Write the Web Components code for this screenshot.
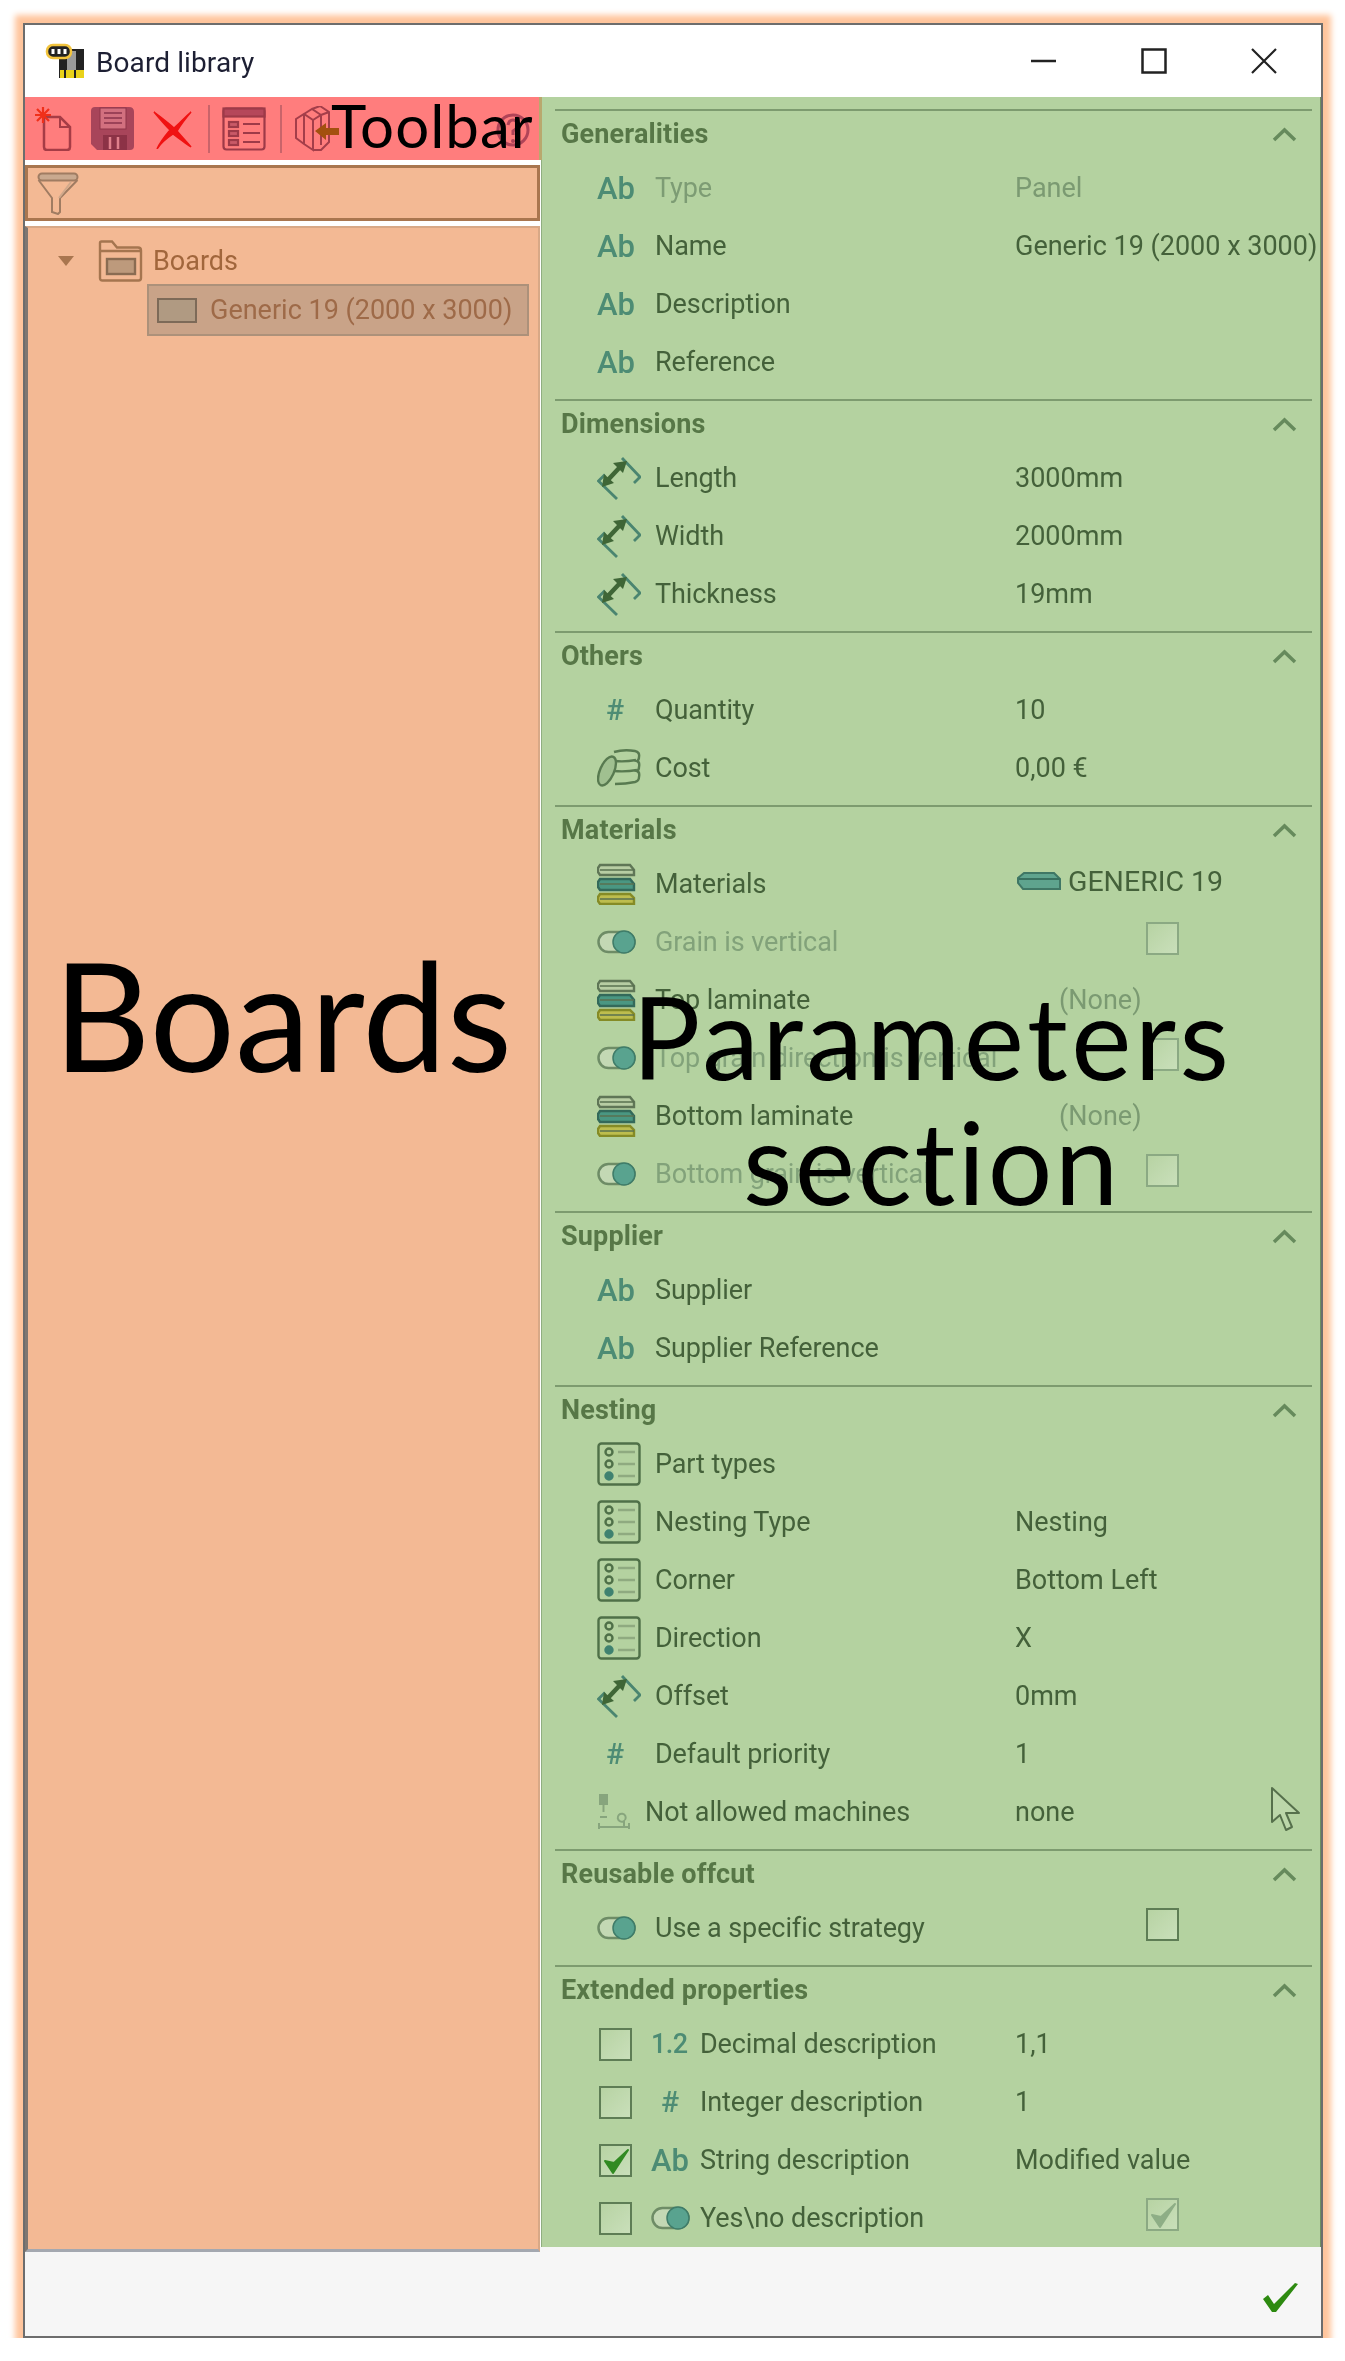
<!DOCTYPE html>
<html>
<head>
<meta charset="utf-8">
<title>Board library</title>
<style>
  html, body { margin: 0; padding: 0; background: #fff; }
  body { font-family: Roboto, "Liberation Sans", sans-serif; }
</style>
</head>
<body>
<board-window>
  <win-titlebar slot="title">Board library</win-titlebar>
  <tool-bar slot="toolbar"></tool-bar>
  <board-tree slot="left">
    <tree-node slot="nodes" icon="folder" arrow>Boards</tree-node>
    <tree-node slot="nodes" icon="board" selected>Generic 19 (2000 x 3000)</tree-node>
  </board-tree>

  <param-panel slot="right">
    <param-section heading="Generalities">
      <param-row icon="ab" value="Panel" muted-value muted-label>Type</param-row>
      <param-row icon="ab" value="Generic 19 (2000 x 3000)">Name</param-row>
      <param-row icon="ab">Description</param-row>
      <param-row icon="ab">Reference</param-row>
    </param-section>
    <param-section heading="Dimensions">
      <param-row icon="dim" value="3000mm">Length</param-row>
      <param-row icon="dim" value="2000mm">Width</param-row>
      <param-row icon="dim" value="19mm">Thickness</param-row>
    </param-section>
    <param-section heading="Others">
      <param-row icon="hash" value="10">Quantity</param-row>
      <param-row icon="coins" value="0,00 €">Cost</param-row>
    </param-section>
    <param-section heading="Materials">
      <param-row icon="layers" value="GENERIC 19" value-icon="sheet">Materials</param-row>
      <param-row icon="toggle" toggle="off" muted-label faded>Grain is vertical</param-row>
      <param-row icon="layers" value="(None)" indent muted-value>Top laminate</param-row>
      <param-row icon="toggle" toggle="off" muted-label faded>Top grain direction is vertical</param-row>
      <param-row icon="layers" value="(None)" indent muted-value>Bottom laminate</param-row>
      <param-row icon="toggle" toggle="off" muted-label faded>Bottom grain is vertical</param-row>
    </param-section>
    <param-section heading="Supplier">
      <param-row icon="ab">Supplier</param-row>
      <param-row icon="ab">Supplier Reference</param-row>
    </param-section>
    <param-section heading="Nesting">
      <param-row icon="list">Part types</param-row>
      <param-row icon="list" value="Nesting">Nesting Type</param-row>
      <param-row icon="list" value="Bottom Left">Corner</param-row>
      <param-row icon="list" value="X">Direction</param-row>
      <param-row icon="dim" value="0mm">Offset</param-row>
      <param-row icon="hash" value="1">Default priority</param-row>
      <param-row icon="machine" value="none" tight>Not allowed machines</param-row>
    </param-section>
    <param-section heading="Reusable offcut">
      <param-row icon="toggle" toggle="off">Use a specific strategy</param-row>
    </param-section>
    <param-section heading="Extended properties">
      <param-row check="off" icon="dec" value="1,1">Decimal description</param-row>
      <param-row check="off" icon="hash" value="1">Integer description</param-row>
      <param-row check="on" icon="ab" value="Modified value">String description</param-row>
      <param-row check="off" icon="toggle" toggle="on">Yes\no description</param-row>
    </param-section>
  </param-panel>

  <mouse-cursor slot="over"></mouse-cursor>
  <over-label slot="over" text="Toolbar" style="--x:331px;--y:95px;--size:60px;--track:1px"></over-label>
  <over-label slot="over" text="Boards" style="--x:53px;--y:938px;--size:151px"></over-label>
  <over-label slot="over" text="Parameters" style="--x:632px;--y:979px;--size:114px;--track:3.500px"></over-label>
  <over-label slot="over" text="section" style="--x:743px;--y:1104px;--size:114px;--track:2.500px"></over-label>

  <win-footer slot="footer"></win-footer>
</board-window>

<script>
const ICONS = {
  folder: `<svg width="45" height="42" viewBox="0 0 45 42" fill="none" stroke="#a5754f" stroke-width="2.4"><path d="M2 38V3q0-1.500 1.500-1.500H14l5 6h21q3 0 3 3V38q0 2.500-2.500 2.500h-36Q2 40.500 2 38z"/><path d="M2 11h41"/><rect x="9" y="19" width="28" height="15" fill="#bd9a7c" stroke="#8a6c52"/></svg>`,
  board: `<svg width="40" height="25" viewBox="0 0 40 25"><rect x="1" y="1" width="38" height="23" fill="#b09a82" stroke="#7d6a58" stroke-width="2"/></svg>`,
  funnel: `<svg width="42" height="43" viewBox="0 0 42 43" fill="none" stroke="#a07c62" stroke-width="2"><path d="M1.500 8 L15 26V40l6 2 2-2V26L40.500 8"/><rect x="1.500" y="1.500" width="39" height="7" rx="3.500" fill="#c9a98f"/><path d="M22 26 L34 10" stroke="#d0a88a"/></svg>`,
  dim: `<svg width="44" height="44" viewBox="0 0 44 44" fill="none"><path d="M20 43 L1.500 25 L8 18.500M25 2 L43 21 L37 27" stroke="#4a8570" stroke-width="2.800"/><path d="M9 26 L24 10" stroke="#3f6636" stroke-width="4.500"/><path d="M5 31 L7 18 L17 27zM30 5 L16 7 L26 17z" fill="#3f6636"/></svg>`,
  coins: `<svg width="44" height="38" viewBox="0 0 44 38" fill="none" stroke="#587a50" stroke-width="2.400"><path d="M17 3q10-3 21-1 5 1 4 6 0 3-2 4 3 1 2 6 0 3-2 4 3 1 2 6 0 4-4 5-9 2-20 2"/><path d="M18 12q10 1 21-1M17 22q12 1 23-1" /><ellipse cx="10" cy="22" rx="7" ry="15.500" transform="rotate(24 10 22)" fill="#a0c090"/></svg>`,
  layers: `<svg width="40" height="42" viewBox="0 0 40 42"><g stroke-width="2.400"><path d="M3 2h30l4 5v5H3L1 9V5z" fill="#b7cda3" stroke="#5f7656"/><path d="M3 16h30l4 5v6H3l-2-3v-5z" fill="#4a9782" stroke="#33695a"/><path d="M3 31h30l4 4v6H3l-2-3v-4z" fill="#bdbd4e" stroke="#858b26"/></g><path d="M3 7h34M3 21h34M3 36h34" stroke="#5a7250" stroke-width="1.500"/></svg>`,
  sheet: `<svg width="44" height="18" viewBox="0 0 44 18"><path d="M7 1h30l6 6v10H6L1 11V6z" fill="#5fa48e" stroke="#3f7765" stroke-width="2"/><path d="M2 7h41" stroke="#38705f" stroke-width="2"/></svg>`,
  toggle: `<svg width="40" height="24" viewBox="0 0 40 24"><rect x="1.500" y="2" width="36" height="20" rx="10" fill="#c3d8b4" stroke="#6e8c66" stroke-width="2.500"/><circle cx="27" cy="12" r="11" fill="#59a38f" stroke="#3f7c69" stroke-width="1.500"/></svg>`,
  list: `<svg width="44" height="44" viewBox="0 0 44 44" fill="none" stroke="#4f7048" stroke-width="2.400"><rect x="1.500" y="1.500" width="41" height="41" rx="3"/><circle cx="12" cy="10" r="3.500"/><circle cx="12" cy="22" r="3.500"/><circle cx="12" cy="34" r="3.500" fill="#3f8270" stroke="#3f8270"/><path d="M21 10h17M21 22h17M21 34h17" stroke="#8faa80" stroke-width="2.500"/></svg>`,
  machine: `<svg width="34" height="36" viewBox="0 0 34 36" fill="none" stroke="#87a57d" stroke-width="2"><rect x="2" y="0" width="9" height="11" fill="#87a57d" stroke="none"/><path d="M6.500 11v7M3 23h7M1 33h32M2 29v6M32 29v6"/><path d="M28 26a4 4 0 1 0-1 1v5" /></svg>`,
  check: `<svg width="25" height="26" viewBox="0 0 25 26"><path d="M1 12 L9 24 L24 1 L10 14 z" fill="#318a22" stroke="#318a22" stroke-width="2" stroke-linejoin="round"/></svg>`
};

// text glyph icons stay real text
const GLYPHS = { ab: 'Ab', hash: '#', dec: '1.2' };

const panelFont = 'Roboto, "Liberation Sans", sans-serif';

class BoardWindow extends HTMLElement {
  constructor() {
    super();
    this.attachShadow({ mode: 'open' }).innerHTML = `
      <style>
        :host {
          display: flex;
          flex-direction: column;
          position: relative;
          box-sizing: border-box;
          width: 1300px;
          height: 2315px;
          margin: 23px 0 0 23px;
          background: #fff;
          border: 2px solid #6d6d6d;
          box-shadow: 0 0 6px 8px #ffc59c;
          font-family: ${panelFont};
          filter: blur(0.45px);
        }
        .body {
          display: grid;
          grid-template-columns: 516px 780px;
          height: 2150px;
        }
        .left {
          display: flex;
          flex-direction: column;
          position: relative;
          z-index: 1;
          height: 2155px;
        }
        .over { position: absolute; left: -25px; top: -25px; z-index: 2; }
      </style>
      <slot name="title"></slot>
      <div class="body">
        <div class="left"><slot name="toolbar"></slot><slot name="left"></slot></div>
        <slot name="right"></slot>
      </div>
      <slot name="footer"></slot>
      <div class="over"><slot name="over"></slot></div>`;
  }
}

class WinTitlebar extends HTMLElement {
  constructor() {
    super();
    this.attachShadow({ mode: 'open' }).innerHTML = `
      <style>
        :host {
          display: flex;
          align-items: center;
          height: 72px;
          padding-left: 20px;
          font-size: 28px;
          letter-spacing: 0.1px;
          color: #1d1f33;
        }
        .logo { margin-right: 11px; }
        .name { flex: 1; padding-top: 2px; }
        .btns { display: flex; align-items: center; }
        .btns svg { display: block; }
      </style>
      <svg class="logo" width="40" height="36" viewBox="0 0 40 36">
        <rect x="14" y="6" width="25" height="29" fill="#222"/>
        <rect x="22" y="8" width="9" height="22" fill="#9a9a9a"/>
        <rect x="15" y="27" width="24" height="8" fill="#e9d21a"/>
        <path d="M20 27v8M30 27v8" stroke="#222" stroke-width="2"/>
        <rect x="2" y="2" width="24" height="13" rx="6" fill="#222" stroke="#f2c33c" stroke-width="2.500"/>
        <path d="M8 6v5M14 6v5M20 6v5" stroke="#fff" stroke-width="3"/>
      </svg>
      <span class="name"><slot></slot></span>
      <div class="btns">
        <svg width="26" height="26" viewBox="0 0 26 26" style="margin-right:84px"><path d="M0 13h25" stroke="#222" stroke-width="2.500"/></svg>
        <svg width="26" height="26" viewBox="0 0 26 26" style="margin-right:84px"><rect x="1.500" y="1.500" width="23" height="23" fill="none" stroke="#222" stroke-width="2.500"/></svg>
        <svg width="26" height="26" viewBox="0 0 26 26" style="margin-right:44px"><path d="M1 1l24 24M25 1L1 25" stroke="#222" stroke-width="2.200"/></svg>
      </div>`;
  }
}

class ToolBar extends HTMLElement {
  constructor() {
    super();
    this.attachShadow({ mode: 'open' }).innerHTML = `
      <style>
        :host {
          display: flex;
          align-items: center;
          box-sizing: border-box;
          flex: none;
          height: 63px;
          width: 517px;
          background: #ff7d7d;
          border-right: 3px solid #b9a86e;
          padding-left: 10px;
        }
        svg { display: block; flex: none; }
        .sep { width: 2px; height: 48px; background: #c9646a; }
      </style>
      <svg width="38" height="44" viewBox="0 0 38 44" fill="none" style="margin-right:18px">
        <path d="M9 10h16l10 10v20q0 3-3 3H12q-3 0-3-3z" stroke="#a63c46" stroke-width="2.500"/>
        <path d="M25 10v10h10" stroke="#a63c46" stroke-width="2"/>
        <path d="M8 0v16M0 8h16M2 2l12 12M14 2L2 14" stroke="#f0301a" stroke-width="2.200"/>
      </svg>
      <svg width="44" height="44" viewBox="0 0 44 44" style="margin-right:17px">
        <path d="M4 0h34q5 0 5 5v34q0 4-4 4H6L0 37V4q0-4 4-4z" fill="#a8455a"/>
        <rect x="9" y="1" width="26" height="21" fill="#d2707f" stroke="#8e3448"/>
        <path d="M13 6h18M13 11h18M13 16h18" stroke="#9c4258" stroke-width="2"/>
        <rect x="12" y="28" width="24" height="15" fill="#8c3246"/>
        <path d="M19 30v12M27 30v12" stroke="#e0808c" stroke-width="2.500"/>
      </svg>
      <svg width="40" height="40" viewBox="0 0 40 40" style="margin-right:16px">
        <path d="M2 3 C12 10 18 16 22 19 C28 14 33 8 39 3 C33 10 28 17 25 22 C30 28 35 33 39 38 C32 33 26 29 21 25 C15 29 9 34 5 40 C8 33 13 27 18 21 C12 15 7 9 2 3z" fill="#f01212" stroke="#f01212" stroke-width="1.500"/>
      </svg>
      <div class="sep" style="margin-right:12px"></div>
      <svg width="44" height="44" viewBox="0 0 44 44" fill="none" stroke="#9e3a48" stroke-width="2.200" style="margin-right:14px">
        <rect x="1.500" y="1.500" width="41" height="41" rx="3"/>
        <rect x="1.500" y="1.500" width="41" height="8" fill="#b6475a"/>
        <rect x="7" y="15" width="9" height="5" fill="#c95a68"/><rect x="7" y="24" width="9" height="5" fill="#c95a68"/><rect x="7" y="33" width="9" height="5" fill="#c95a68"/>
        <path d="M21 17h17M21 26h17M21 35h17"/>
      </svg>
      <div class="sep" style="margin-right:13px"></div>
      <svg width="44" height="46" viewBox="0 0 44 46" fill="none" style="margin-right:157px">
        <g stroke="#a43e4a" stroke-width="2">
          <path d="M1 13L9 8l9 6v30l-9-6L1 32zM9 8l8-5 9 6M17 3l8-3 9 6v30l-8 8-8 0M18 14l8-5 8-3M26 9v30M9 8v30"/>
        </g>
        <path d="M20 25l11-8v5h13v7H31v5z" fill="#a3500f"/>
      </svg>
      <svg width="34" height="44" viewBox="0 0 34 44" fill="none">
        <circle cx="17" cy="23" r="15" stroke="#b04458" stroke-width="3"/>
        <path d="M12 18q1-5 5-5t5 5q0 3-5 6v4" stroke="#b04458" stroke-width="3"/>
        <circle cx="17" cy="34" r="2" fill="#b04458"/>
      </svg>`;
  }
}

class BoardTree extends HTMLElement {
  constructor() {
    super();
    this.attachShadow({ mode: 'open' }).innerHTML = `
      <style>
        :host { display: flex; flex-direction: column; flex: 1; min-height: 0; width: 515px; background: #fff; }
        .filter {
          box-sizing: border-box;
          flex: none;
          height: 56px;
          margin-top: 5px;
          padding: 4px 0 0 9px;
          background: #f3b994;
          border: 3px solid #a9764f;
        }
        .filter svg { display: block; }
        .list {
          flex: 1;
          margin-top: 5px;
          padding-top: 9px;
          background: #f3b994;
          border: 2px solid #d8a886;
          border-left: 3px solid #7f7771;
          border-bottom: 3px solid #a4a8b0;
        }
      </style>
      <div class="filter">${ICONS.funnel}</div>
      <div class="list"><slot name="nodes"></slot></div>`;
  }
}

class TreeNode extends HTMLElement {
  constructor() {
    super();
    const sel = this.hasAttribute('selected');
    const arrow = this.hasAttribute('arrow');
    this.attachShadow({ mode: 'open' }).innerHTML = `
      <style>
        :host {
          display: flex;
          align-items: center;
          box-sizing: border-box;
          font-size: 27px;
          color: #a1663c;
        }
        :host([arrow]) { height: 47px; padding-left: 30px; }
        :host([selected]) {
          height: 52px;
          margin: 0 9px 0 119px;
          padding-left: 8px;
          background: #c9a388;
          border: 2px solid #ac917a;
          color: #9e6a48;
        }
        .tri { width: 0; height: 0; border: 8px solid transparent; border-top: 10px solid #a9764f; border-bottom: 0; margin-right: 24px; }
        svg { display: block; }
        .ico { margin-right: ${sel ? 13 : 10}px; }
      </style>
      ${arrow ? '<span class="tri"></span>' : ''}
      <span class="ico">${ICONS[this.getAttribute('icon')]}</span>
      <span><slot></slot></span>`;
  }
}

class ParamPanel extends HTMLElement {
  constructor() {
    super();
    this.attachShadow({ mode: 'open' }).innerHTML = `
      <style>
        :host {
          display: block;
          box-sizing: border-box;
          height: 2150px;
          overflow: hidden;
          padding-top: 12px;
          background: #b4d2a0;
          border-left: 1px solid #8fae80;
          border-right: 1px solid #6f8f60;
        }
      </style>
      <slot></slot>`;
  }
}

class ParamSection extends HTMLElement {
  constructor() {
    super();
    this.attachShadow({ mode: 'open' }).innerHTML = `
      <style>
        :host {
          display: block;
          box-sizing: border-box;
          margin: 0 8px 0 13px;
          padding-bottom: 8px;
          border-top: 2px solid #7d9b6f;
        }
        .head {
          display: flex;
          align-items: center;
          justify-content: space-between;
          height: 48px;
          padding: 0 15px 2px 6px;
          box-sizing: border-box;
          font-size: 27px;
          font-weight: 700;
          letter-spacing: 0.15px;
          color: #577747;
        }
        svg { display: block; }
      </style>
      <div class="head">
        <span>${this.getAttribute('heading')}</span>
        <svg width="25" height="15" viewBox="0 0 25 15" fill="none"><path d="M2 13L12.500 3 23 13" stroke="#668a5c" stroke-width="3.500"/></svg>
      </div>
      <slot></slot>`;
  }
}

class ParamRow extends HTMLElement {
  constructor() {
    super();
    const icon = this.getAttribute('icon');
    const check = this.getAttribute('check');
    const toggle = this.getAttribute('toggle');
    const value = this.getAttribute('value');
    const valueIcon = this.getAttribute('value-icon');
    const ic = GLYPHS[icon]
      ? `<span class="glyph ${icon}">${GLYPHS[icon]}</span>`
      : ICONS[icon];
    this.attachShadow({ mode: 'open' }).innerHTML = `
      <style>
        :host {
          display: grid;
          grid-template-columns: 58px 360px 1fr;
          align-items: center;
          height: 58px;
          padding-left: 42px;
          font-size: 27px;
          color: #44613a;
          white-space: nowrap;
        }
        :host([check]) { grid-template-columns: 52px 49px 315px 1fr; padding-left: 44px; }
        :host([muted-label]) .label { color: #7d9c74; }
        :host([faded]) .label { color: #82a27a; }
        :host([tight]) .label { margin-left: -10px; }
        :host([muted-value]) .value { color: #7b9a72; }
        :host([indent]) .value { padding-left: 44px; }
        :host([value-icon]) .value { transform: translateY(-3px); font-size: 28.5px; }
        .label { letter-spacing: -0.1px; }
        .icon { display: flex; align-items: center; }
        .icon svg { display: block; }
        .glyph { color: #4d8c74; font-size: 31px; font-weight: 500; line-height: 1; letter-spacing: 0; }
        .glyph.hash { font-size: 30px; padding-left: 9px; font-weight: 500; }
        .glyph.dec { font-size: 27px; letter-spacing: -0.5px; }
        :host([check]) .glyph.hash { padding-left: 10px; }
        .value { display: flex; align-items: center; }
        .value svg { display: block; margin: 0 7px 0 2px; }
        .box {
          box-sizing: border-box;
          width: 33px;
          height: 33px;
          border: 2px solid #5e7d55;
          background: linear-gradient(135deg, #b7d3a3, #c9dfba);
        }
        .box.faded { border-color: #8ba983; }
        .box svg { display: block; margin: 3px 0 0 3px; }
        .box.on svg path { fill: #8eae86; stroke: #8eae86; }
        .box.green svg path { fill: #318a22; stroke: #318a22; }
        .tog { margin: 0 0 8px 131px; }
      </style>
      ${check ? `<span class="box ${check === 'on' ? 'green' : ''}">${check === 'on' ? ICONS.check : ''}</span>` : ''}
      <span class="icon">${ic}</span>
      <span class="label"><slot></slot></span>
      <span class="value">${valueIcon ? ICONS[valueIcon] : ''}${value || ''}${
        toggle ? `<span class="box tog ${toggle === 'on' ? 'on faded' : ''} ${this.hasAttribute('faded') ? 'faded' : ''}">${toggle === 'on' ? ICONS.check : ''}</span>` : ''
      }</span>`;
  }
}

class WinFooter extends HTMLElement {
  constructor() {
    super();
    this.attachShadow({ mode: 'open' }).innerHTML = `
      <style>
        :host {
          display: flex;
          justify-content: flex-end;
          align-items: flex-start;
          box-sizing: border-box;
          flex: 1;
          background: #f6f6f6;
          padding: 35px 22px 0 0;
        }
        svg { display: block; }
      </style>
      <svg width="37" height="31" viewBox="0 0 37 31"><path d="M1 17 L6 13 L12 22 L33 1 L36 2 L14 30 L10 30z" fill="#2d8a10"/></svg>`;
  }
}

// pointer caught in the screenshot, sits over the panel
class MouseCursor extends HTMLElement {
  constructor() {
    super();
    this.attachShadow({ mode: 'open' }).innerHTML = `
      <style>
        :host { position: absolute; left: 1270px; top: 1786px; }
        svg { display: block; }
      </style>
      <svg width="32" height="48" viewBox="0 0 32 48">
        <path d="M2 2 L2 36 L10 29 L16 44 L22 41 L16 27 L29 27z" fill="#bcd7aa" stroke="#56704c" stroke-width="2" stroke-linejoin="round"/>
      </svg>`;
  }
}

// big annotation text laid over the screenshot
class OverLabel extends HTMLElement {
  constructor() {
    super();
    this.attachShadow({ mode: 'open' }).innerHTML = `
      <style>
        :host {
          position: absolute;
          left: var(--x);
          top: var(--y);
          font-family: Lato, "Open Sans", sans-serif;
          font-size: var(--size);
          letter-spacing: var(--track, 0);
          line-height: 1;
          color: #000;
          white-space: nowrap;
        }
      </style>
      ${this.getAttribute('text')}`;
  }
}

customElements.define('board-window', BoardWindow);
customElements.define('win-titlebar', WinTitlebar);
customElements.define('tool-bar', ToolBar);
customElements.define('board-tree', BoardTree);
customElements.define('tree-node', TreeNode);
customElements.define('param-panel', ParamPanel);
customElements.define('param-section', ParamSection);
customElements.define('param-row', ParamRow);
customElements.define('win-footer', WinFooter);
customElements.define('mouse-cursor', MouseCursor);
customElements.define('over-label', OverLabel);
</script>
</body>
</html>
